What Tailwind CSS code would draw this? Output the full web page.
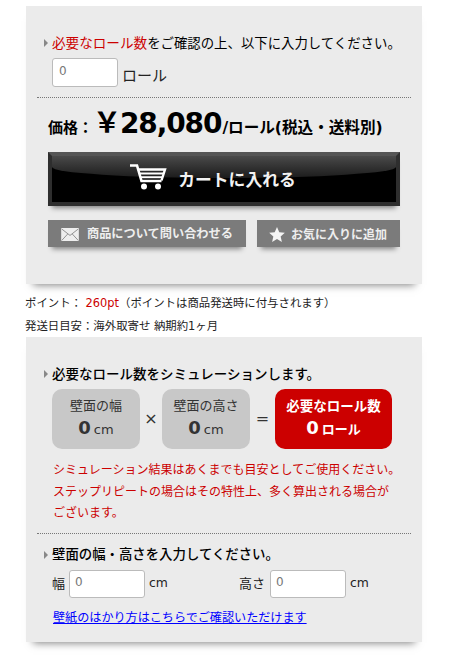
<!DOCTYPE html>
<html lang="ja">
<head>
<meta charset="UTF-8">
<script src="https://cdn.jsdelivr.net/npm/@tailwindcss/browser@4"></script>
<title>カートに入れる</title>
</head>
<body class="bg-white text-black overflow-hidden font-['DejaVu_Sans','Noto_Sans_CJK_JP',sans-serif]">
<div class="w-[452px] h-[661px] pt-[6px] pl-[26px]">

  <!-- cart panel -->
  <section class="w-[396px] h-[278px] bg-[#ebebeb] shadow-[0_8px_8px_-7px_rgba(0,0,0,0.5)] pt-[28px]">
    <h3 class="flex items-center h-[18px] pl-[18px] text-[13.400px] leading-[18px] font-normal">
      <span class="w-0 h-0 mr-[4px] border-y-[4px] border-y-transparent border-l-[4px] border-l-[#888]"></span>
      <span><span class="text-[13.600px] text-[#c00]">必要なロール数</span>をご確認の上、以下に入力してください。</span>
    </h3>
    <div class="flex items-center mt-[6px] ml-[26px] h-[29px]">
      <input type="text" placeholder="0" class="w-[66px] h-[29px] pl-[6px] pb-[4px] bg-white border border-[#bbb] rounded-[3px] text-[12px] placeholder:text-[#777]">
      <span class="ml-[4px] mt-[8px] text-[15px] text-[#222]">ロール</span>
    </div>
    <div class="mx-[11px] mt-[10px] border-t border-dotted border-[#777]"></div>
    <div class="flex items-baseline h-[40px] mt-[6px] pl-[22px] font-bold">
      <span class="text-[15px]">価格：</span>
      <span class="ml-0 text-[28px] leading-[40px] tracking-[-1.100px]">￥28,080</span>
      <span class="ml-[1px] text-[15.600px] font-semibold">/ロール(税込・送料別)</span>
    </div>
    <!-- big button -->
    <div class="relative flex items-center justify-center w-[352px] h-[54px] ml-[22px] mt-[8px] bg-black border-[4px] border-[#2e2e2e] border-t-[#555] shadow-[0_6px_5px_-4px_rgba(0,0,0,0.45)] overflow-hidden">
      <div class="absolute left-0 right-0 top-0 h-[22px] rounded-b-[50%] bg-gradient-to-b from-[#4a4a4a] to-[#1c1c1c]"></div>
      <svg class="relative -ml-[23px] mr-[11px] -mt-[4px]" width="38" height="28" viewBox="0 0 38 28" fill="none" stroke="#fff">
        <path d="M1 2.500h7l4.500 15.500h20" stroke-width="2.600"/>
        <path d="M9 6.500h27l-3.500 11" stroke-width="2.400"/>
        <path d="M11 10.500h23M12 14.300h21" stroke-width="2"/>
        <circle cx="15" cy="23.500" r="3" fill="#fff" stroke="none"/>
        <circle cx="29" cy="23.500" r="3" fill="#fff" stroke="none"/>
      </svg>
      <span class="relative mt-[4px] text-[16.800px] font-bold text-[#f2f2f2]">カートに入れる</span>
    </div>
    <div class="flex gap-[11px] ml-[22px] mt-[14px]">
      <div class="flex items-center w-[198px] h-[27px] pl-[13px] pt-[2px] bg-[#7b7b7b] shadow-[0_6px_5px_-4px_rgba(0,0,0,0.45)] text-[12.200px] font-semibold text-[#eee]">
        <svg class="mr-[8px]" width="18" height="13" viewBox="0 0 19 14"><rect width="19" height="14" fill="#eee"/><path d="M0.500 1l9 7 9-7M0.500 13.500l6.500-7M18.500 13.500l-6.500-7" fill="none" stroke="#8a8a8a"/></svg>
        <span>商品について問い合わせる</span>
      </div>
      <div class="flex items-center w-[143px] h-[27px] pl-[12px] pt-[2px] bg-[#7b7b7b] shadow-[0_6px_5px_-4px_rgba(0,0,0,0.45)] text-[12px] font-semibold text-[#eee]">
        <svg class="mr-[6px]" width="16" height="15" viewBox="0 0 24 23"><path d="M12 0l3.500 8 8.500.800-6.400 5.700 1.900 8.500L12 18.500 4.500 23l1.900-8.500L0 8.800 8.500 8z" fill="#f4f4f4"/></svg>
        <span>お気に入りに追加</span>
      </div>
    </div>
  </section>

  <!-- point / shipping -->
  <p class="-ml-[1px] mt-[10px] h-[18px] text-[11.400px] leading-[18px] text-[#222]">ポイント： <span class="text-[#c00]">260pt</span>（ポイントは商品発送時に付与されます）</p>
  <p class="-ml-[1px] mt-[5px] h-[18px] text-[11.400px] leading-[18px] text-[#222]">発送日目安：海外取寄せ 納期約1ヶ月</p>

  <!-- simulation panel -->
  <section class="w-[396px] h-[305px] mt-[2px] bg-[#ebebeb] shadow-[0_8px_8px_-7px_rgba(0,0,0,0.5)] pt-[28px]">
    <h3 class="flex items-center h-[18px] pl-[18px] text-[13.500px] leading-[18px] font-medium">
      <span class="w-0 h-0 mr-[4px] border-y-[4px] border-y-transparent border-l-[4px] border-l-[#888]"></span>
      <span>必要なロール数をシミュレーションします。</span>
    </h3>
    <div class="flex items-center mt-[6px] ml-[26px] h-[60px]">
      <div class="flex flex-col items-center justify-center w-[88px] h-[60px] rounded-[10px] bg-[#c8c8c8] text-[#333]">
        <span class="text-[13px] leading-[20px]">壁面の幅</span>
        <span class="font-bold text-[18px] leading-[24px]">0<span class="ml-[3px] text-[13px] font-normal">cm</span></span>
      </div>
      <span class="w-[22px] text-center text-[16px] text-[#333]">×</span>
      <div class="flex flex-col items-center justify-center w-[88px] h-[60px] rounded-[10px] bg-[#c8c8c8] text-[#333]">
        <span class="text-[13px] leading-[20px]">壁面の高さ</span>
        <span class="font-bold text-[18px] leading-[24px]">0<span class="ml-[3px] text-[13px] font-normal">cm</span></span>
      </div>
      <span class="w-[25px] text-center text-[16px] text-[#333]">=</span>
      <div class="flex flex-col items-center justify-center w-[117px] h-[60px] rounded-[10px] bg-[#c00] text-white font-bold">
        <span class="text-[13.500px] leading-[20px]">必要なロール数</span>
        <span class="text-[18px] leading-[24px]">0<span class="ml-[3px] text-[13px]">ロール</span></span>
      </div>
    </div>
    <p class="ml-[27px] mt-[11px] text-[12px] leading-[21.500px] text-[#c00]">シミュレーション結果はあくまでも目安としてご使用ください。<br>ステップリピートの場合はその特性上、多く算出される場合が<br>ございます。</p>
    <div class="mx-[11px] mt-[8px] border-t border-dotted border-[#777]"></div>
    <h3 class="flex items-center h-[18px] mt-[12px] pl-[18px] text-[13.400px] leading-[18px] font-medium">
      <span class="w-0 h-0 mr-[4px] border-y-[4px] border-y-transparent border-l-[4px] border-l-[#888]"></span>
      <span>壁面の幅・高さを入力してください。</span>
    </h3>
    <div class="flex items-center mt-[6px] ml-[26px] h-[28px] text-[13px] text-[#222]">
      <span class="w-[17px]">幅</span>
      <input type="text" placeholder="0" class="w-[76px] h-[28px] pl-[5px] pb-[4px] bg-white border border-[#bbb] rounded-[3px] text-[12px] placeholder:text-[#777]">
      <span class="ml-[4px] w-[90px] text-[12.400px]">cm</span>
      <span class="w-[31px]">高さ</span>
      <input type="text" placeholder="0" class="w-[76px] h-[28px] pl-[5px] pb-[4px] bg-white border border-[#bbb] rounded-[3px] text-[12px] placeholder:text-[#777]">
      <span class="ml-[4px] text-[12.400px]">cm</span>
    </div>
    <a href="#" class="block ml-[27px] mt-[11px] text-[12.100px] leading-[18px] text-[#00f] underline">壁紙のはかり方はこちらでご確認いただけます</a>
  </section>
</div>
</body>
</html>
